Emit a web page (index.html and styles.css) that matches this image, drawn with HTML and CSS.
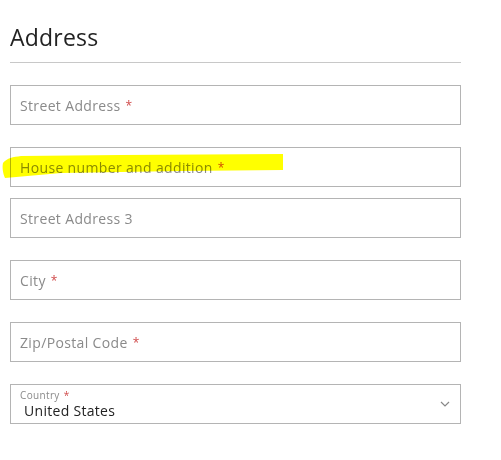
FILE: index.html
```html
<!DOCTYPE html>
<html>
<head>
<meta charset="utf-8">
<link rel="stylesheet" href="styles.css">
</head>
<body>
<div class="form">
  <h2 class="title">Address</h2>
  <div class="fields">
    <div class="field"><span class="ph">Street Address</span><span class="req">*</span></div>
    <div class="field highlighted"><span class="ph">House number and addition</span><span class="req">*</span>
      <svg class="marker" width="290" height="40" viewBox="0 0 290 40"><path d="M2 21 C6 16 12 15 20 14 L120 13 L282 12 L282 28 L180 29 L60 31 L4 36 C2 32 1 25 2 21 Z" fill="#ffff00"/></svg>
    </div>
    <div class="field tight"><span class="ph">Street Address 3</span></div>
    <div class="field"><span class="ph">City</span><span class="req">*</span></div>
    <div class="field"><span class="ph">Zip/Postal Code</span><span class="req">*</span></div>
    <div class="field select">
      <div class="sel-text">
        <div class="sel-label">Country<span class="req">*</span></div>
        <div class="sel-value">United States</div>
      </div>
      <svg class="chev" width="10" height="6" viewBox="0 0 10 6"><path d="M1 1 L5 5 L9 1" fill="none" stroke="#888" stroke-width="1.2"/></svg>
    </div>
  </div>
</div>
</body>
</html>
```
FILE: styles.css
```css
body {
  margin: 0;
  background: #fff;
  font-family: "Open Sans", "Liberation Sans", sans-serif;
}
.form {
  padding: 20px 0 0 10px;
  width: 451px;
}
.title {
  margin: 0;
  font-weight: 400;
  font-size: 23px;
  line-height: 34px;
  color: #222;
  letter-spacing: 0.2px;
  padding-bottom: 8px;
  border-bottom: 1px solid #c8c8c8;
}
.fields {
  display: flex;
  flex-direction: column;
  gap: 22px;
  margin-top: 22px;
}
.field {
  position: relative;
  box-sizing: border-box;
  height: 40px;
  border: 1px solid #b4b4b4;
  display: flex;
  align-items: center;
  padding-left: 9px;
  font-size: 14px;
  letter-spacing: 0.35px;
  color: #8a8a8a;
}
.tight {
  margin-top: -11px;
}
.req {
  color: #d04a4a;
  margin-left: 5px;
  font-size: 12px;
}
.marker {
  position: absolute;
  left: -10px;
  top: -6px;
  mix-blend-mode: multiply;
  pointer-events: none;
}
.select {
  justify-content: space-between;
  padding-right: 10px;
}
.sel-text {
  display: flex;
  flex-direction: column;
  gap: 3px;
  margin-top: -1px;
}
.sel-label {
  font-size: 10px;
  line-height: 10px;
  color: #8a8a8a;
}
.sel-label .req {
  font-size: 10px;
  margin-left: 4px;
}
.sel-value {
  font-size: 14px;
  line-height: 15px;
  color: #222;
  padding-left: 4px;
  letter-spacing: 0.3px;
}
```
